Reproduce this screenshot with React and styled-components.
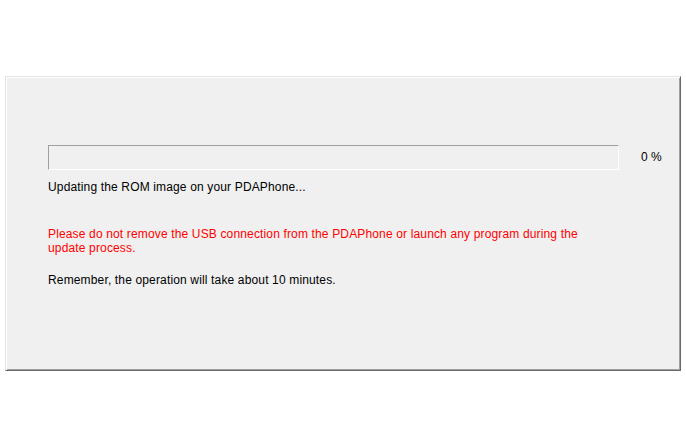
import React from "react";
import styled, { createGlobalStyle } from "styled-components";

const Global = createGlobalStyle`
  html, body { margin: 0; padding: 0; background: #ffffff; }
  body { font-family: "Liberation Sans", Arial, sans-serif; }
`;

const Page = styled.div`
  width: 686px;
  height: 447px;
  padding: 76px 0 0 5px;
  box-sizing: border-box;
`;

const Panel = styled.div`
  width: 676px;
  height: 295px;
  box-sizing: border-box;
  background: #f0f0f0;
  border-style: solid;
  border-width: 1px;
  border-color: #e3e3e3 #696969 #696969 #e3e3e3;
  box-shadow: inset 1px 1px 0 #ffffff, inset -1px -1px 0 #a0a0a0;
  padding: 68px 18px 0 42px;
  display: flex;
  flex-direction: column;
`;

const ProgressRow = styled.div`
  display: flex;
  align-items: center;
  gap: 22px;
`;

const Bar = styled.div`
  width: 571px;
  height: 25px;
  box-sizing: border-box;
  border-style: solid;
  border-width: 1px;
  border-color: #a0a0a0 #ffffff #ffffff #a0a0a0;
  background: #f0f0f0;
`;

const Fill = styled.div`
  height: 100%;
  background: #06b025;
`;

const Percent = styled.span`
  font-size: 12px;
  color: #000;
  line-height: 14px;
  margin-top: -1px;
`;

const Text = styled.p`
  margin: ${(p) => p.$top}px 0 0 0;
  font-size: 12px;
  line-height: 14px;
  letter-spacing: 0.15px;
  color: ${(p) => (p.$warn ? "#ff0000" : "#000000")};
`;

export default function App() {
  const progress = 0;
  return (
    <>
      <Global />
      <Page>
        <Panel>
          <ProgressRow>
            <Bar>
              <Fill style={{ width: `${progress}%` }} />
            </Bar>
            <Percent>{progress} %</Percent>
          </ProgressRow>
          <Text $top={10}>Updating the ROM image on your PDAPhone...</Text>
          <Text $top={33} $warn>
            Please do not remove the USB connection from the PDAPhone or launch any program during the
            <br />
            update process.
          </Text>
          <Text $top={18}>Remember, the operation will take about 10 minutes.</Text>
        </Panel>
      </Page>
    </>
  );
}
